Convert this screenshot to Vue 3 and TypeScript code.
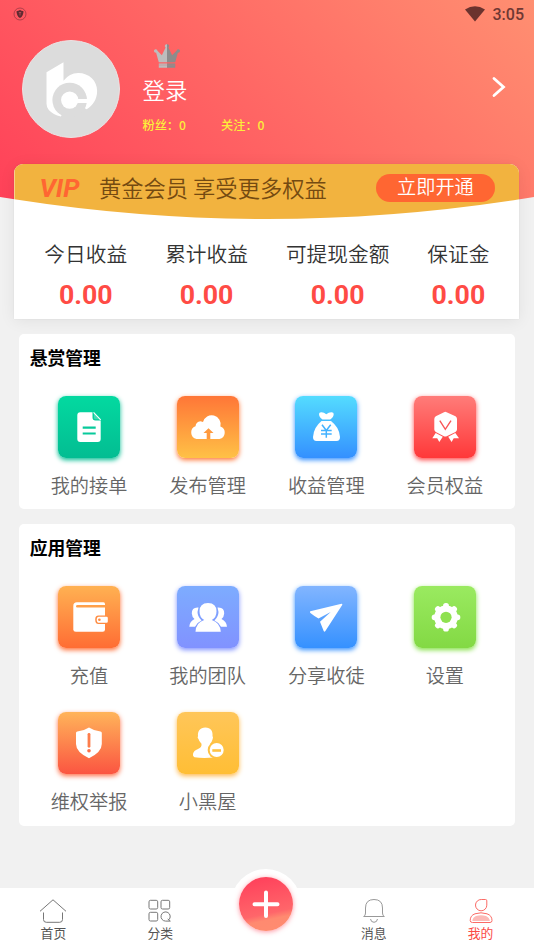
<script setup lang="ts">
interface Entry { key: string; label: string }
interface Stat { label: string; value: string }

const stats: Stat[] = [
  { label: '今日收益', value: '0.00' },
  { label: '累计收益', value: '0.00' },
  { label: '可提现金额', value: '0.00' },
  { label: '保证金', value: '0.00' },
]

const panels: { title: string; entries: Entry[] }[] = [
  {
    title: '悬赏管理',
    entries: [
      { key: 'orders', label: '我的接单' },
      { key: 'publish', label: '发布管理' },
      { key: 'income', label: '收益管理' },
      { key: 'member', label: '会员权益' },
    ],
  },
  {
    title: '应用管理',
    entries: [
      { key: 'wallet', label: '充值' },
      { key: 'team', label: '我的团队' },
      { key: 'share', label: '分享收徒' },
      { key: 'settings', label: '设置' },
      { key: 'report', label: '维权举报' },
      { key: 'blocked', label: '小黑屋' },
    ],
  },
]

const gearTeeth: number[] = [0, 45, 90, 135, 180, 225, 270, 315]
</script>

<template>
  <div class="app">
    <header class="hero">
      <div class="status">
        <svg class="status-shield" viewBox="0 0 14 14">
          <circle cx="7" cy="7" r="6" fill="none" stroke="#a03a45" stroke-width=".8" />
          <path d="M3.500 4.200Q5.600 4 7 3q1.400 1 3.500 1.200Q10.500 9 7 11 3.500 9 3.500 4.200Z" fill="#602a31" />
          <path d="M7 5v3.500M5.800 5.500h2.400" stroke="#b84a57" stroke-width=".9" />
        </svg>
        <div class="status-right">
          <svg class="wifi" viewBox="0 0 20 16"><path d="M0 3.600Q10-3 20 3.600L10 15.600Z" fill="#6b332e" /></svg>
          <span>3:05</span>
        </div>
      </div>
      <div class="profile">
        <div class="avatar">
          <svg viewBox="0 0 294 294">
            <path d="M72 96 124 65V122Q142 98 169 98C203 98 227 122 227 153C227 178 214 198 195 209L143 181 116 231Q92 225 79 211Q72 203 72 192Z" fill="#fff" />
            <circle cx="143" cy="181" r="53" fill="#dcdcdc" />
            <circle cx="143" cy="181" r="26.500" fill="#fff" />
            <path d="M150 178H200V190H150Z" fill="#fff" />
          </svg>
        </div>
        <div class="who">
          <svg class="crown" viewBox="0 0 76 70">
            <path d="M14 53 6 25A5 5 0 1 1 10 20L23 33 34 10A5 5 0 0 1 38 1V53Z" fill="#bdbdbd" />
            <path d="M62 53 70 25A5 5 0 1 0 66 20L53 33 42 10A5 5 0 0 0 38 1V53Z" fill="#8c8c8c" />
            <path d="M14 57H38V69H14Z" fill="#bdbdbd" /><path d="M38 57H62V69H38Z" fill="#8c8c8c" />
            <path d="M14 61.500H62" stroke="#d0717a" stroke-width="1.200" />
          </svg>
          <div class="login">登录</div>
          <div class="follow"><span>粉丝：0</span><span>关注：0</span></div>
        </div>
        <svg class="arrow" viewBox="0 0 14 22"><path d="M2 2.500 11.500 11 2 19.500" fill="none" stroke="#fff" stroke-width="2.800" stroke-linecap="round" stroke-linejoin="miter" /></svg>
      </div>
    </header>

    <section class="account">
      <div class="vip">
        <span class="vip-mark">VIP</span>
        <span class="vip-text">黄金会员 享受更多权益</span>
        <button class="open">立即开通</button>
      </div>
      <div class="stats">
        <div v-for="s in stats" :key="s.label" class="stat">
          <span class="stat-label">{{ s.label }}</span>
          <strong>{{ s.value }}</strong>
        </div>
      </div>
    </section>

    <section v-for="p in panels" :key="p.title" class="panel">
      <h2>{{ p.title }}</h2>
      <div class="grid">
        <div v-for="e in p.entries" :key="e.key" class="entry">
          <div class="tile" :class="e.key">
            <svg viewBox="0 0 62 62" fill="#fff">
              <template v-if="e.key === 'orders'">
                <path d="M22.300 16.300H34.500V21.500Q34.500 24.500 37.500 24.500H42.700V43Q42.700 46 39.700 46H22.300Q19.300 46 19.300 43V19.300Q19.300 16.300 22.300 16.300Z" />
                <path d="M36 17 42.200 23.200H37.500Q36 23.200 36 21.700Z" opacity=".25" />
                <path d="M35.600 16.300 42.700 23.800" stroke="#fff" stroke-width="1.100" />
                <path d="M24.700 31.700h13M24.700 37.500h13" stroke="#07ca9b" stroke-width="2.200" />
              </template>
              <template v-else-if="e.key === 'publish'">
                <path d="M19.500 43A6.700 6.700 0 0 1 18.500 30.200Q19 25.500 23.500 25.200L26 26A8.900 8.900 0 0 1 43.400 30.500A6.500 6.500 0 0 1 42.500 43Z" />
                <path d="M31.500 32.300 36.500 37H33.300V43H29.700V37H26.500Z" fill="#ff9a3e" />
              </template>
              <template v-else-if="e.key === 'income'">
                <path d="M27.500 23.500Q24 21 24 18Q24 16 26.500 16.200Q29 16.300 31.300 18.200Q33.600 16.300 36.200 16.200Q38.700 16 38.700 18Q38.700 21 35.200 23.500Z" />
                <path d="M26.500 25H36Q44.500 31.500 45 41Q45 45 41.500 45H21.500Q18 45 18 41Q18.500 31.500 26.500 25Z" />
                <path d="M27 28.700 31.300 34.500 35.700 28.700M31.300 34V41.800M26 34.500H36.700M26 38H36.700" stroke="#43b2ff" stroke-width="1.500" fill="none" />
              </template>
              <template v-else-if="e.key === 'member'">
                <path d="M30 16.200Q31.300 15.300 32.600 16.200L41.500 20.300Q43 21.200 43 23V33.500Q43 35 41.500 35.900L32.700 40.200Q31.300 41 29.900 40.200L21.800 35.900Q20.300 35 20.300 33.500V23Q20.300 21.200 21.800 20.300Z" />
                <path d="M25.800 24.700 31.300 33.300 37 24.700" fill="none" stroke="#f95556" stroke-width="1.400" />
                <path d="M21.700 37 28.800 40.800 25.300 46 23.200 42.300 18.300 42.200ZM41.300 37 34.200 40.800 37.600 46 39.700 42.300 45 42.200Z" />
              </template>
              <template v-else-if="e.key === 'wallet'">
                <path d="M19 16.300H45.500Q47 16.300 47 18V43.500Q47 45.800 44.700 45.800H17.800Q15.300 45.800 15.300 43.500V20Q15.300 16.300 19 16.300Z" />
                <path d="M18 20.300Q18 19 19.500 19H47.500V21.500H19.300Q18 21.500 18 20.300Z" fill="#ffa04a" />
                <path d="M47.500 29.500H40.500Q37.200 29.500 37.200 33.700T40.500 38H47.500Z" fill="#ff8b40" />
                <path d="M41 30.700H48.500Q49.800 30.700 49.800 32V35.500Q49.800 36.800 48.500 36.800H41Q38.700 36.800 38.700 33.700T41 30.700Z" />
                <circle cx="41.400" cy="33.700" r="1.300" fill="#ff8b40" />
              </template>
              <template v-else-if="e.key === 'team'">
                <path d="M21.500 21.500Q14.500 21 14.800 27.500Q15 31 17.500 33Q12.500 35.500 12.300 40.700H18Q20 36.500 24.500 34.500Q20.500 30.500 20.500 26ZM40.500 21.500Q47.500 21 47.200 27.500Q47 31 44.500 33Q49.700 35.500 50 40.700H44Q42 36.500 37.500 34.500Q41.500 30.500 41.500 26Z" />
                <path d="M31 17Q39.500 17.200 39.500 25.300Q39.500 31.500 34.800 34Q43 36.500 43.800 45.800H18.500Q19 36.500 27.200 34Q22.500 31.500 22.500 25.300Q22.500 17.200 31 17Z" />
              </template>
              <template v-else-if="e.key === 'share'">
                <path d="M15.300 25.300 46.500 17.800Q47.800 17.800 47.200 19L30.200 45.300Q29.300 46.400 28.700 45L25 35.700 35.700 26 23.500 32.600Q20 30.500 15.400 26.900Q14.300 25.900 15.300 25.300Z" />
              </template>
              <template v-else-if="e.key === 'settings'">
                <circle cx="32" cy="31.300" r="11.800" />
                <rect v-for="a in gearTeeth" :key="a" x="29.100" y="17" width="5.800" height="8" rx="2.700" :transform="`rotate(${a} 32 31.300)`" />
                <circle cx="32" cy="31.300" r="5.600" fill="#8fe150" />
              </template>
              <template v-else-if="e.key === 'report'">
                <path d="M31 15.600Q36 19 42.500 19.500Q43.800 19.700 43.800 21V32Q43.800 40 31 46.300Q18 40 18 32V21Q18 19.700 19.300 19.500Q26 19 31 15.600Z" />
                <path d="M31 22.300V34.300" stroke="#fd7d4b" stroke-width="2.800" stroke-linecap="round" />
                <circle cx="31" cy="38.700" r="1.800" fill="#fd6f48" />
              </template>
              <template v-else>
                <path d="M28.300 15.500C34 15.500 36 19.500 35.500 24Q36.500 25 35.500 27.500Q34.800 30 33.300 31.500Q33.300 34 37 35.500V45.500Q26 46.500 17.500 45.300Q15.500 44.800 16 42Q16.500 38.500 21 37Q25 35.500 24.500 31.800Q22 29.500 21.500 27Q20 26 21 24C20.500 19.500 23 15.500 28.300 15.500Z" />
                <circle cx="39.700" cy="38" r="9" fill="#fec243" /><circle cx="39.700" cy="38" r="7" />
                <path d="M35.300 38.500H44" stroke="#fec243" stroke-width="2.600" />
              </template>
            </svg>
          </div>
          <span>{{ e.label }}</span>
        </div>
      </div>
    </section>

    <nav class="tabbar">
      <div class="tab">
        <svg viewBox="0 0 28 26"><path d="M1 13.300 14 1.800 27 13.300M4.500 14.500V21.500Q4.500 24.300 7.300 24.300H20.700Q23.500 24.300 23.500 21.500V14.500" /></svg>
        <span>首页</span>
      </div>
      <div class="tab">
        <svg viewBox="0 0 28 26"><rect x="3" y="2.300" width="8.700" height="8.700" rx="1.500" /><rect x="15" y="2.300" width="8.700" height="8.700" rx="1.500" /><rect x="3" y="14.300" width="8.700" height="8.700" rx="1.500" /><path d="M22.800 21.800A4.600 4.600 0 1 0 19.600 23.100H24.500M21.800 20.800 23.800 23.100" /></svg>
        <span>分类</span>
      </div>
      <div class="tab plus-slot">
        <div class="plus">
          <svg viewBox="0 0 54 54"><path d="M27 15.500V39M15.500 27.200H38.500" stroke="#fff" stroke-width="4" stroke-linecap="round" /></svg>
        </div>
      </div>
      <div class="tab bell">
        <svg viewBox="0 0 28 26"><path d="M3.700 18.500Q5.500 17.500 5.500 15V10Q5.500 1.500 14 1.500T22.500 10V15Q22.500 17.500 24.300 18.500H3.700ZM10.500 21Q11 24.300 14 24.300T17.500 21" /></svg>
        <span>消息</span>
      </div>
      <div class="tab active">
        <svg viewBox="0 0 28 26"><path d="M14.300 1.500H18.500Q19.800 1.500 19.800 2.800V7.200A5.650 5.650 0 1 1 14.300 1.500Z" /><path d="M8 15.800Q14 13.800 20 15.800Q25 17.500 25 22.500Q25 24.500 23 24.500H5.500Q3.200 24.500 3.200 22.500Q3.200 17.500 8 15.800Z" /><path class="fill" d="M9 18Q14 16.300 19 18Q22.500 19.500 22.900 23H5.400Q5.500 19.500 9 18Z" /></svg>
        <span>我的</span>
      </div>
    </nav>
  </div>
</template>

<style>
body { background: #f1f1f1; }
</style>

<style scoped>
* { box-sizing: border-box; }
.app {
  width: 534px;
  height: 949px;
  overflow: hidden;
  display: flex;
  flex-direction: column;
  background: #f1f1f1;
  font-family: "Noto Sans CJK SC", sans-serif;
  font-weight: 350;
}
svg { display: block; }
.hero {
  flex: none;
  height: 219px;
  background: linear-gradient(45deg, #ff3f58, #ff8f71);
  clip-path: path("M0 0H534V197Q267 241 0 197Z");
}
.status {
  height: 28px;
  padding: 0 10px 0 13px;
  display: flex;
  justify-content: space-between;
  align-items: center;
}
.status-shield { width: 14px; height: 14px; }
.status-right {
  display: flex;
  align-items: center;
  gap: 8px;
  font: 500 16px/28px Roboto, sans-serif;
  color: #6f3833;
}
.status-right span { padding-top: 1px; }
.wifi { width: 20px; height: 16px; margin-top: -1px; }
.profile {
  display: flex;
  padding: 12px 28px 0 22px;
}
.avatar {
  width: 98px;
  height: 98px;
  flex: none;
  border-radius: 50%;
  background: #dcdcdc;
  border: 1px solid #ece2e3;
  overflow: hidden;
}
.who { flex: 1; margin-left: 22.500px; padding-top: 4px; }
.crown { width: 26px; height: 24px; margin-left: 11.500px; }
.login {
  margin-top: 4px;
  font-size: 22.400px;
  line-height: 34px;
  color: #fff;
}
.follow {
  margin-top: 10px;
  display: flex;
  gap: 35px;
  font-size: 12.200px;
  font-weight: 500;
  line-height: 18px;
  color: #fcee3a;
}
.arrow { width: 14px; height: 22px; margin-top: 36px; }

.account {
  flex: none;
  width: 505px;
  height: 155.400px;
  margin: -55px 0 0 14.400px;
  position: relative;
  border-radius: 9px 9px 0 0;
  background: #fff;
  box-shadow: 0 0 1px rgba(0, 0, 0, .16), 0 2px 16px rgba(0, 0, 0, .07);
}
.vip {
  height: 55px;
  padding: 0 24.500px 7px 25px;
  display: flex;
  align-items: center;
  border-radius: 9px 9px 0 0;
  background: #f2b33f;
  clip-path: path("M0 0H505V35.300Q252.500 74.700 0 35.300Z");
}
.vip-mark {
  width: 59.500px;
  font: italic 700 26px/30px Roboto, sans-serif;
  color: #ff6632;
}
.vip-text { padding-bottom: 3px; font-size: 22.300px; line-height: 32px; color: #744a11; white-space: nowrap; }
.open {
  margin-left: auto;
  width: 119px;
  height: 27.500px;
  padding: 0 0 4px;
  border: 0;
  border-radius: 14px;
  background: #ff6632;
  color: #fff;
  font: inherit;
  font-size: 19.200px;
  line-height: 23px;
}
.stats {
  display: flex;
  justify-content: center;
  gap: 38px;
  padding-top: 18px;
}
.stat { display: flex; flex-direction: column; align-items: center; }
.stat-label { font-size: 20.700px; line-height: 32px; color: #333; }
.stat strong {
  margin-top: 9px;
  font: 700 26.700px/34px Roboto, sans-serif;
  color: #ff4b45;
}

.panel {
  flex: none;
  width: 496.500px;
  margin: 14.400px 0 0 18.700px;
  padding: 9px 11px 9.600px;
  border-radius: 5px;
  background: #fff;
}
h2 { margin: 0; font-size: 17.800px; line-height: 29px; font-weight: 700; color: #000; }
.grid {
  display: grid;
  grid-template-columns: repeat(4, 1fr);
  row-gap: 22.700px;
  padding-top: 24px;
}
.entry {
  height: 104px;
  display: flex;
  flex-direction: column;
  align-items: center;
  font-size: 19.200px;
  line-height: 28px;
  color: #666;
}
.entry > span { margin-top: 13px; }
.tile { width: 62px; height: 62px; border-radius: 8px; }
.orders { background: linear-gradient(#03d9a0, #03bd92); box-shadow: 0 2px 5px #03bd92; }
.publish { background: linear-gradient(#ff7637, #ffc146); box-shadow: 0 2px 5px #ff7637; }
.income { background: linear-gradient(#54dcff, #3490ff); box-shadow: 0 2px 5px #3490ff; }
.member { background: linear-gradient(#ff7c79, #ff3839); box-shadow: 0 2px 5px #ff4748; }
.wallet { background: linear-gradient(#ffb152, #ff6d34); box-shadow: 0 2px 5px #ff6d34; }
.team { background: linear-gradient(#7dacff, #8192ff); box-shadow: 0 2px 5px #8192ff; }
.share { background: linear-gradient(#82b5ff, #3591ff); box-shadow: 0 2px 5px #3591ff; }
.settings { background: linear-gradient(#9aea60, #83d944); box-shadow: 0 2px 5px #83e044; }
.report { background: linear-gradient(#ffb45a, #fb5541); box-shadow: 0 2px 5px #ff7048; }
.blocked { background: linear-gradient(#ffc659, #ffbe35); box-shadow: 0 2px 5px #ffb94d; }

.tabbar {
  flex: none;
  height: 61px;
  margin-top: auto;
  display: flex;
  background: #fff;
}
.tab {
  flex: 1;
  display: flex;
  flex-direction: column;
  align-items: center;
  padding-top: 10px;
  font-size: 12.800px;
  font-weight: 400;
  line-height: 18px;
  color: #555;
}
.tab > svg { width: 28px; height: 26px; fill: none; stroke: #777; stroke-width: 1; }
.tab.bell > svg { stroke: #999; }
.tab.active { color: #fb4b46; }
.tab.active > svg { stroke: #fb6b66; }
.tab.active .fill { fill: #fcbab7; stroke: none; }
.plus-slot { padding: 0; }
.plus {
  flex: none;
  width: 70px;
  height: 70px;
  margin: -19px 1px 0 0;
  padding: 8px;
  border-radius: 50%;
  background: #fff;
}
.plus > svg {
  width: 54px;
  height: 54px;
  border-radius: 50%;
  background: linear-gradient(168deg, #ff405b 5%, #ff666a 65%, #ff8a70 75%, #ff8c70);
  box-shadow: 0 1px 5px rgba(255, 65, 90, .55);
}
</style>
